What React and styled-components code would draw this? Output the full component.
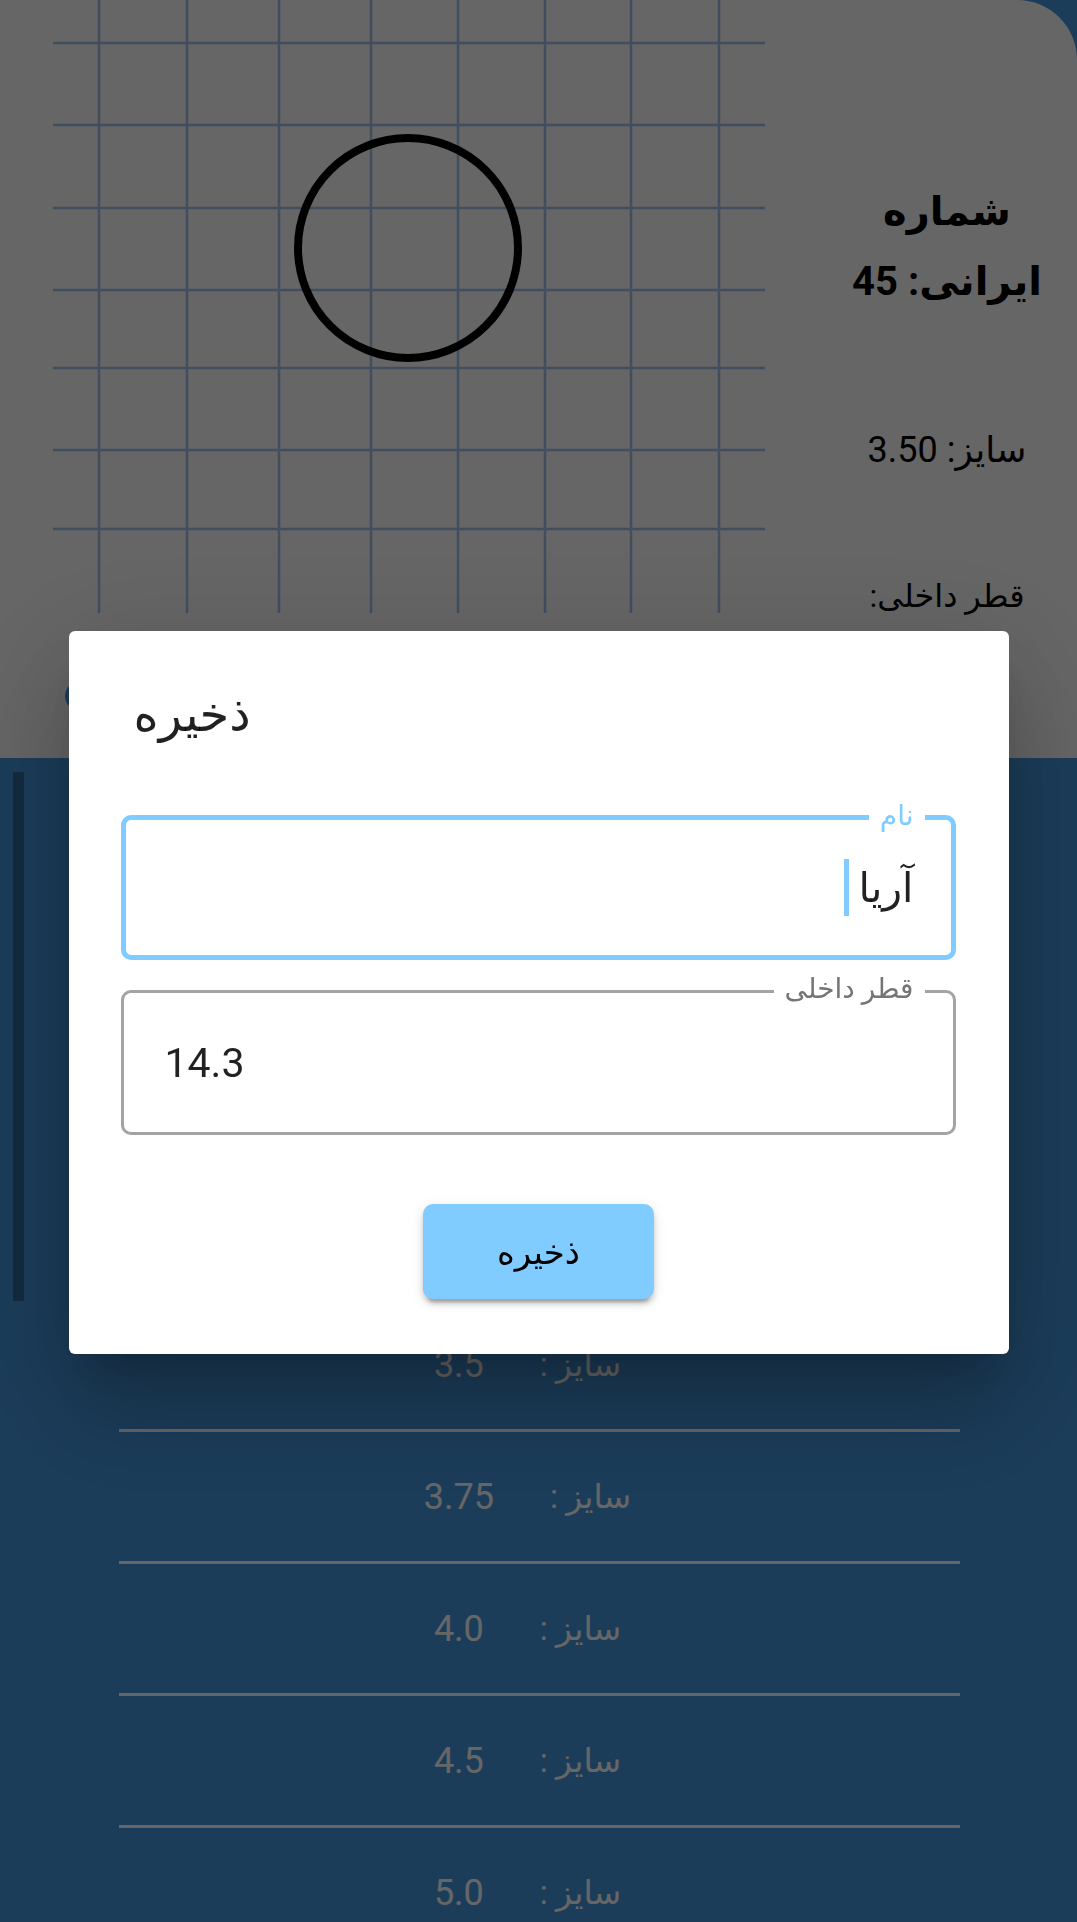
import React from 'react'
import styled, { createGlobalStyle } from 'styled-components'

const GlobalStyle = createGlobalStyle`
  html, body {
    margin: 0;
    padding: 0;
  }
  body {
    background: #4598e0;
    font-family: Roboto, "DejaVu Sans", sans-serif;
    overflow: hidden;
  }
`

const hLines = [43, 125, 208, 290, 368, 450, 529]
const vLines = [46, 134, 226, 318, 405, 492, 578, 666]
const sizes = ['2.5', '2.75', '3.0', '3.25', '3.5', '3.75', '4.0', '4.5', '5.0']

const App = () => {
  return (
    <Page>
      <GlobalStyle />
      <TopCard>
        <TopRow>
          <Canvas>
            <svg width="712" height="613" viewBox="0 0 712 613">
              {hLines.map((y) => (
                <line key={'h' + y} x1="0" x2="712" y1={y} y2={y} stroke="#a0c4ea" strokeWidth="2.5" />
              ))}
              {vLines.map((x) => (
                <line key={'v' + x} x1={x} x2={x} y1="0" y2="613" stroke="#a0c4ea" strokeWidth="2.5" />
              ))}
              <circle cx="355" cy="248" r="110" fill="none" stroke="#000" strokeWidth="8" />
            </svg>
          </Canvas>
          <Info>
            <Heading>شماره ایرانی: 45</Heading>
            <InfoLine>سایز: 3.50</InfoLine>
            <InfoLine>
              <Fa>قطر داخلی:</Fa>
            </InfoLine>
          </Info>
        </TopRow>
        <ActionRow>
          <Pill />
        </ActionRow>
      </TopCard>

      <ListArea>
        <Thumb />
        <List>
          {sizes.map((s) => (
            <Row key={s}>
              <RowLabel>سایز :</RowLabel>
              <RowValue>{s}</RowValue>
            </Row>
          ))}
        </List>
      </ListArea>

      <Backdrop>
        <Dialog>
          <DialogTitle>ذخیره</DialogTitle>
          <Fields>
            <Field $focused>
              <FieldLabel $focused>نام</FieldLabel>
              <FieldValue $rtl>
                آریا
                <Caret />
              </FieldValue>
            </Field>
            <Field>
              <FieldLabel>قطر داخلی</FieldLabel>
              <FieldValue>14.3</FieldValue>
            </Field>
          </Fields>
          <Actions>
            <SaveButton>ذخیره</SaveButton>
          </Actions>
        </Dialog>
      </Backdrop>
    </Page>
  )
}

export default App

const Page = styled.div`
  position: relative;
  width: 1077px;
  height: 1922px;
  overflow: hidden;
`
const TopCard = styled.div`
  background: #fff;
  height: 758px;
  border-top-right-radius: 60px;
  display: flex;
  flex-direction: column;
`
const TopRow = styled.div`
  display: flex;
  height: 613px;
`
const Canvas = styled.div`
  padding-left: 53px;
  width: 712px;
  svg {
    display: block;
  }
`
const Info = styled.div`
  flex: 1;
  direction: rtl;
  text-align: center;
  padding: 177px 0 0 52px;
  color: #000;
`
const Heading = styled.div`
  font-size: 40px;
  font-weight: 700;
  line-height: 70px;
  margin-bottom: 108px;
`
const InfoLine = styled.div`
  font-size: 36px;
  line-height: 50px;
  margin-bottom: 95px;
`
const Fa = styled.span`
  font-size: 32px;
`
const ActionRow = styled.div`
  padding-left: 65px;
  margin-top: 68px;
`
const Pill = styled.div`
  width: 300px;
  height: 30px;
  border-radius: 15px;
  background: #4598e0;
`
const ListArea = styled.div`
  display: flex;
  padding-top: 14px;
`
const Thumb = styled.div`
  width: 11px;
  height: 529px;
  margin-left: 13px;
  background: rgba(0, 0, 0, 0.3);
`
const List = styled.div`
  width: 841px;
  margin-left: 95px;
`
const Row = styled.div`
  height: 129px;
  border-bottom: 3px solid #fff;
  display: flex;
  direction: rtl;
  align-items: center;
  justify-content: center;
  gap: 56px;
  padding-right: 24px;
  color: #fff;
  font-size: 36px;
`
const RowLabel = styled.span`
  font-size: 33px;
`
const RowValue = styled.span``

const Backdrop = styled.div`
  position: fixed;
  inset: 0;
  background: rgba(0, 0, 0, 0.6);
  display: flex;
  justify-content: center;
  align-items: flex-start;
  padding-top: 631px;
`
const Dialog = styled.div`
  width: 940px;
  background: #fff;
  border-radius: 6px;
  box-shadow: 0 29px 40px -18px rgba(0, 0, 0, 0.2), 0 63px 100px 8px rgba(0, 0, 0, 0.14),
    0 24px 120px 21px rgba(0, 0, 0, 0.12);
  padding-bottom: 55px;
`
const DialogTitle = styled.div`
  padding: 44px 0 0 65px;
  height: 80px;
  line-height: 80px;
  font-size: 48px;
  color: rgba(0, 0, 0, 0.87);
`
const Fields = styled.div`
  padding: 60px 53px 0 52px;
  display: flex;
  flex-direction: column;
  gap: 30px;
`
const Field = styled.div`
  position: relative;
  height: 145px;
  box-sizing: border-box;
  border: ${(p) => (p.$focused ? '5px solid #80cbff' : '3px solid #a3a3a3')};
  border-radius: 10px;
  display: flex;
  align-items: center;
`
const FieldLabel = styled.span`
  position: absolute;
  top: -22px;
  right: ${(p) => (p.$focused ? '26px' : '28px')};
  padding: 0 11px;
  background: #fff;
  font-size: 28px;
  line-height: 36px;
  color: ${(p) => (p.$focused ? '#80cbff' : '#757575')};
`
const FieldValue = styled.div`
  flex: 1;
  display: flex;
  align-items: center;
  direction: ${(p) => (p.$rtl ? 'rtl' : 'ltr')};
  padding: ${(p) => (p.$rtl ? '0 37px 0 0' : '0 0 0 41px')};
  font-size: 41px;
  color: rgba(0, 0, 0, 0.87);
`
const Caret = styled.span`
  display: inline-block;
  width: 5px;
  height: 57px;
  margin-right: 9px;
  background: #80cbff;
`
const Actions = styled.div`
  display: flex;
  justify-content: center;
  margin-top: 69px;
`
const SaveButton = styled.button`
  width: 231px;
  height: 95px;
  border: none;
  border-radius: 10px;
  background: #80cbff;
  color: #000;
  font-family: Roboto, "DejaVu Sans", sans-serif;
  font-size: 34px;
  box-shadow: 0 8px 3px -5px rgba(0, 0, 0, 0.2), 0 5px 5px 0 rgba(0, 0, 0, 0.14),
    0 3px 13px 0 rgba(0, 0, 0, 0.12);
`
